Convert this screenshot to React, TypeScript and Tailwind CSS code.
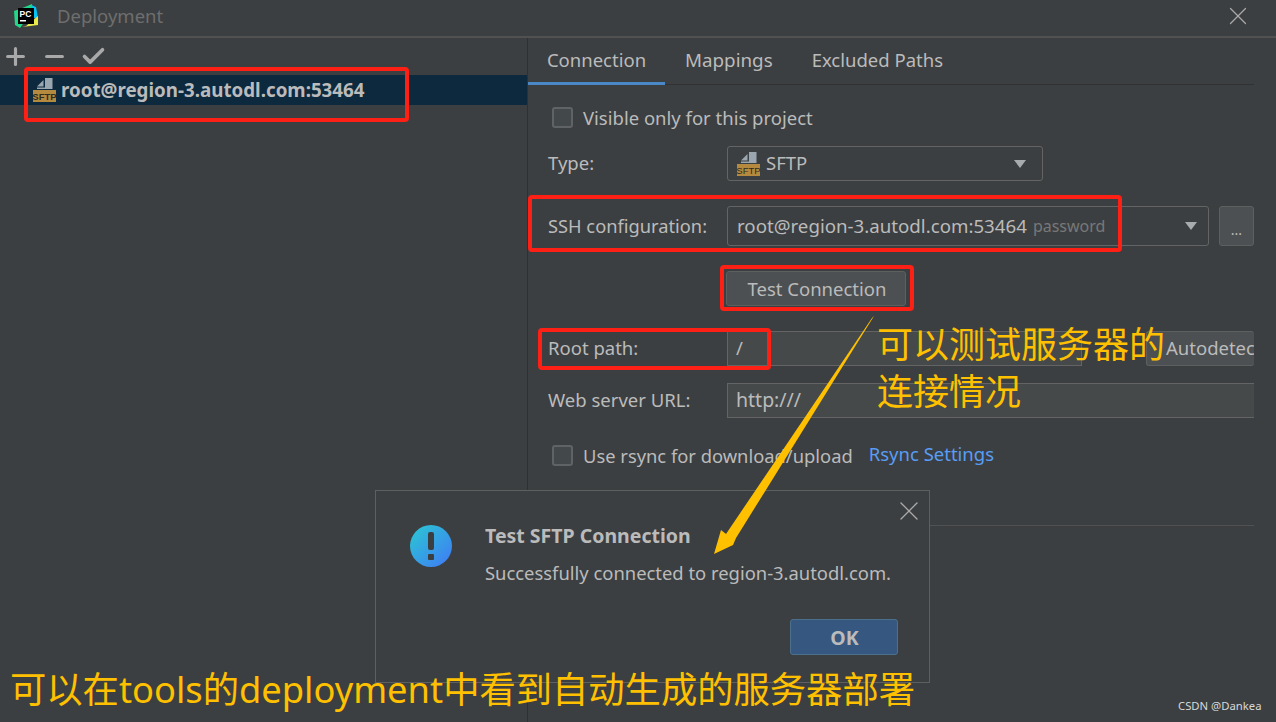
import React from 'react';
import { Plus, Minus, Check, X } from 'lucide-react';

const SftpIcon: React.FC = () => (
  <svg width="24" height="26" viewBox="0 0 24 26" className="shrink-0">
    <path d="M4 9.5 L10.5 3 V9.5 Z" fill="#9aa7b0" />
    <path d="M12 1 H19.5 V12 H4 V10.5 H12 Z" fill="#9aa7b0" />
    <rect x="0" y="13" width="23" height="12" fill="#b58a3e" />
    <text x="11.5" y="23" textAnchor="middle" fontSize="9.5" fill="#2f2b22" fontFamily="'Liberation Sans', sans-serif">SFTP</text>
  </svg>
);

const PyCharmLogo: React.FC = () => (
  <svg width="25" height="25" viewBox="0 0 25 25">
    <path d="M0 7 L6 5 L18 0 L19 6 L6 24 L1 21 Z" fill="#21d789" />
    <path d="M17 1 L22 3 L24 14 L18 14 Z" fill="#07c3f2" />
    <path d="M12 22 L24 12 L24 21 L8 23 Z" fill="#e8e84a" />
    <rect x="4" y="4" width="16" height="16" fill="#000" />
    <text x="5.5" y="12.5" fontSize="8.5" fontWeight="700" fill="#fff" fontFamily="'Liberation Sans', sans-serif">PC</text>
    <rect x="6" y="16" width="6" height="1.5" fill="#fff" />
  </svg>
);

const Checkbox: React.FC = () => (
  <span className="w-[21px] h-[21px] shrink-0 rounded-[3px] border-2 border-[#5f6365] bg-[#43494a]" />
);

const Caret: React.FC = () => (
  <span className="ml-auto w-0 h-0 shrink-0 border-l-[6.5px] border-r-[6.5px] border-t-[8px] border-l-transparent border-r-transparent border-t-[#a8acae]" />
);

const fieldCls = 'border border-[#646464] bg-[#45494a] h-[35px] flex items-center';

const App: React.FC = () => (
  <div className="relative w-[1276px] h-[722px] overflow-hidden bg-[#3c3f41] text-[#bbbbbb] text-[18.5px] font-['Noto_Sans','Noto_Sans_CJK_SC',sans-serif] leading-none">
    {/* title bar */}
    <div className="h-[38px] flex items-center border-b-2 border-[#515151] pl-[14px] pr-[23px] pb-[4px]">
      <PyCharmLogo />
      <span className="ml-[18px] text-[#6e6e6e]">Deployment</span>
      <X size={30} strokeWidth={1} className="ml-auto text-[#a9a9a9]" />
    </div>

    <div className="flex h-[684px]">
      {/* left list */}
      <div className="w-[528px] shrink-0 border-r border-[#2f3031]">
        <div className="h-[37px] flex items-center gap-[12px] pl-[2px] text-[#a9a9a9]">
          <Plus size={27} strokeWidth={2.8} />
          <Minus size={27} strokeWidth={2.8} />
          <Check size={27} strokeWidth={3.2} />
        </div>
        <div className="h-[30px] bg-[#0d293e] flex items-center pl-[33px] gap-[4px] font-bold text-[18.75px]">
          <SftpIcon />
          <span>root@region-3.autodl.com:53464</span>
        </div>
      </div>

      {/* right form */}
      <div className="flex-1 min-w-0 pr-[22px]">
        <div className="h-[47px] flex border-b border-[#323232]">
          <div className="w-[137px] h-[47px] border-b-[3px] border-[#4a88c7] flex items-center justify-center">Connection</div>
          <div className="ml-[20px] h-[47px] pb-[3px] flex items-center text-[18.8px]">Mappings</div>
          <div className="ml-[39px] h-[47px] pb-[3px] flex items-center">Excluded Paths</div>
        </div>

        <div className="pl-[24px] mt-[22px] h-[21px] flex items-center gap-[10px]">
          <Checkbox />
          <span className="pt-[1px]">Visible only for this project</span>
        </div>

        <div className="mt-[18px] flex items-center pl-[20px]">
          <span className="w-[179px]">Type:</span>
          <div className="w-[316px] h-[35px] rounded-[3px] border border-[#646464] flex items-center pl-[9px] pr-[16px] gap-[5px]">
            <SftpIcon />
            <span>SFTP</span>
            <Caret />
          </div>
        </div>

        <div className="mt-[25px] flex items-center pl-[20px]">
          <span className="w-[179px] text-[18.3px]">SSH configuration:</span>
          <div className="w-[482px] h-[40px] rounded-[3px] border border-[#646464] flex items-center pl-[9px] pr-[11px]">
            <span className="text-[18.7px]">root@region-3.autodl.com:53464</span>
            <span className="ml-[6px] text-[16px] text-[#787878]">password</span>
            <Caret />
          </div>
          <div className="ml-[10px] w-[35px] h-[40px] pt-[8px] rounded-[3px] border border-[#5e6060] bg-[#4c5052] flex items-center justify-center text-[14px]">...</div>
        </div>

        <div className="mt-[25px] pl-[198px]">
          <div className="w-[180px] h-[35px] pt-[1px] pl-[2px] rounded-[3px] border border-[#5e6060] bg-[#4c5052] flex items-center justify-center">Test Connection</div>
        </div>

        <div className="mt-[25px] flex items-center pl-[20px]">
          <span className="w-[179px]">Root path:</span>
          <div className={`${fieldCls} w-[355px] pl-[8px]`}>/</div>
          <div className="ml-[64px] flex-1 min-w-0 h-[35px] rounded-[3px] bg-[#4c5052] border border-[#5e6060] border-r-0 overflow-hidden flex items-center pl-[19px] whitespace-nowrap">Autodetect</div>
        </div>

        <div className="mt-[17px] flex items-center pl-[20px]">
          <span className="w-[179px] pb-[1px]">Web server URL:</span>
          <div className={`${fieldCls} flex-1 min-w-0 pl-[8px] pb-[1px] border-r-0 text-[19.5px]`}>http:///</div>
        </div>

        <div className="mt-[27px] pl-[24px] flex items-center gap-[10px]">
          <Checkbox />
          <span className="pt-[1px] text-[18.35px]">Use rsync for download/upload</span>
          <span className="ml-[6px] text-[#589df6] relative -top-[1px]">Rsync Settings</span>
        </div>

        <div className="mt-[59px] h-px bg-[#515151]" />
      </div>
    </div>

    {/* test dialog */}
    <div className="absolute left-[375px] top-[490px] w-[555px] h-[193px] bg-[#3c3f41] border border-[#5e6060]">
      <X size={32} strokeWidth={1} className="absolute right-[4px] top-[4px] text-[#a9a9a9]" />
      <div className="absolute left-[34px] top-[34px] w-[42px] h-[42px] rounded-full bg-gradient-to-br from-[#2bc8d0] to-[#4176f5] flex flex-col items-center justify-center gap-[4px]">
        <span className="w-[6px] h-[18px] rounded-[2px] bg-[#3c3f41]" />
        <span className="w-[6px] h-[6px] rounded-[1px] bg-[#3c3f41]" />
      </div>
      <div className="absolute left-[109px] top-[35px] font-bold text-[19.5px]">Test SFTP Connection</div>
      <div className="absolute left-[109px] top-[73px] text-[18.4px]">Successfully connected to region-3.autodl.com.</div>
      <div className="absolute left-[414px] top-[128px] w-[108px] h-[36px] pt-[1px] pl-[1px] rounded-[3px] bg-[#365880] border border-[#4c708c] flex items-center justify-center font-bold text-[19.5px]">OK</div>
    </div>

    {/* annotations */}
    <div className="absolute left-[24px] top-[67px] w-[385px] h-[55px] border-[4px] border-[#fe2015] rounded-[4px]" />
    <div className="absolute left-[528px] top-[195px] w-[594px] h-[57px] border-[4px] border-[#fe2015] rounded-[4px]" />
    <div className="absolute left-[720px] top-[265px] w-[194px] h-[46px] border-[4px] border-[#fe2015] rounded-[4px]" />
    <div className="absolute left-[538px] top-[328px] w-[233px] h-[42px] border-[4px] border-[#fe2015] rounded-[4px]" />

    <svg className="absolute left-0 top-0 pointer-events-none" width="1276" height="722">
      <polygon points="874,316 736,538 733,545 714,554 721,530 726,534 872,318" fill="#ffc000" />
    </svg>

    <div className="absolute left-[877px] top-[319px] text-[36px] leading-[47px] text-[#ffc000] font-['Noto_Sans_CJK_SC',sans-serif] whitespace-nowrap">
      可以测试服务器的<br />连接情况
    </div>
    <div className="absolute left-[10px] top-[671px] text-[36.3px] text-[#ffc000] font-['Noto_Sans','Noto_Sans_CJK_SC',sans-serif] whitespace-nowrap">
      可以在tools的deployment中看到自动生成的服务器部署
    </div>
    <div className="absolute left-[1178px] top-[700px] text-[11.3px] text-[#d8d8d8]">CSDN @Dankea</div>
  </div>
);

export default App;
